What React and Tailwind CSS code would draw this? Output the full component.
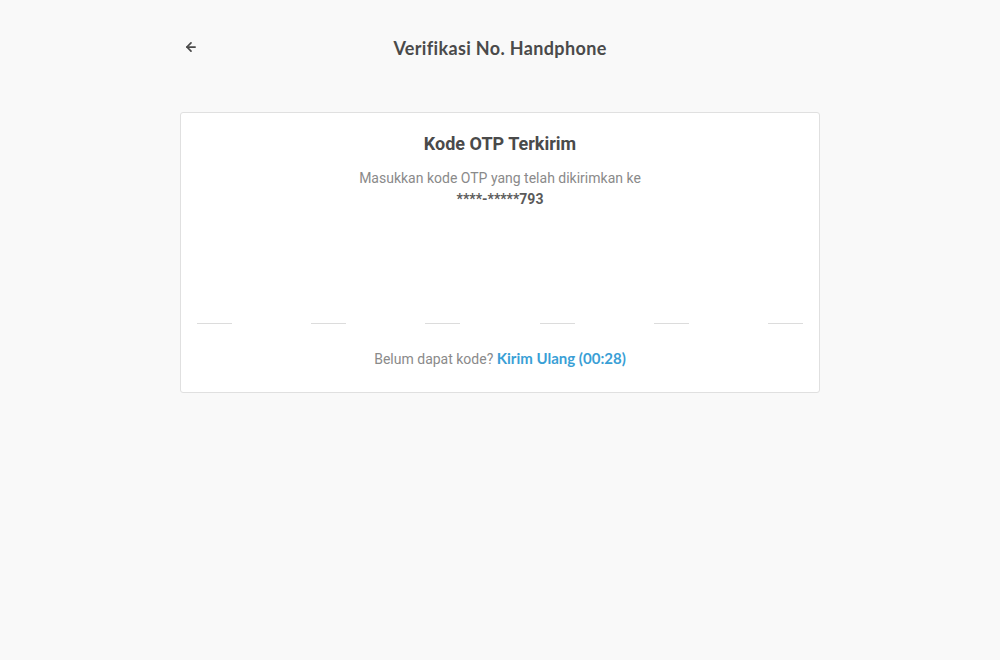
import { ArrowLeft } from 'lucide-react';

const App = () => {
  const slots = [0, 1, 2, 3, 4, 5];

  return (
    <div className="min-h-[660px] w-full bg-[#f9f9f9] font-['Roboto',sans-serif]">
      <div className="mx-auto w-[640px]">
        <div className="relative flex h-[96px] items-center justify-center">
          <button className="absolute left-[4px] top-[40px] text-[#4a4a4a]">
            <ArrowLeft size={14} strokeWidth={3} />
          </button>
          <h1 className="font-['Lato',sans-serif] text-[18px] font-bold tracking-[0.35px] text-[#4a4a4a]">
            Verifikasi No. Handphone
          </h1>
        </div>

        <div className="mt-[16px] rounded-[3px] border border-[#e0e0e0] bg-white px-[16px] pb-[22px] pt-[20px]">
          <h2 className="text-center text-[18px] font-bold leading-[22px] text-[#4a4a4a]">Kode OTP Terkirim</h2>
          <p className="mt-[13px] text-center text-[14px] leading-[21px] text-[#8a8a8a]">
            Masukkan kode OTP yang telah dikirimkan ke
          </p>
          <p className="text-center text-[14px] font-bold leading-[21px] text-[#5a5a5a]">****-*****793</p>

          <div className="mt-[113px] flex justify-between">
            {slots.map(i => (
              <div key={i} className="h-[1px] w-[35px] bg-[#dcdcdc]" />
            ))}
          </div>

          <p className="mt-[24px] text-center text-[14px] leading-[21px] text-[#8a8a8a]">
            Belum dapat kode?{' '}
            <span className="font-['Lato',sans-serif] text-[15px] font-bold text-[#3a9fd6]">Kirim Ulang (00:28)</span>
          </p>
        </div>
      </div>
    </div>
  );
};

export default App;
